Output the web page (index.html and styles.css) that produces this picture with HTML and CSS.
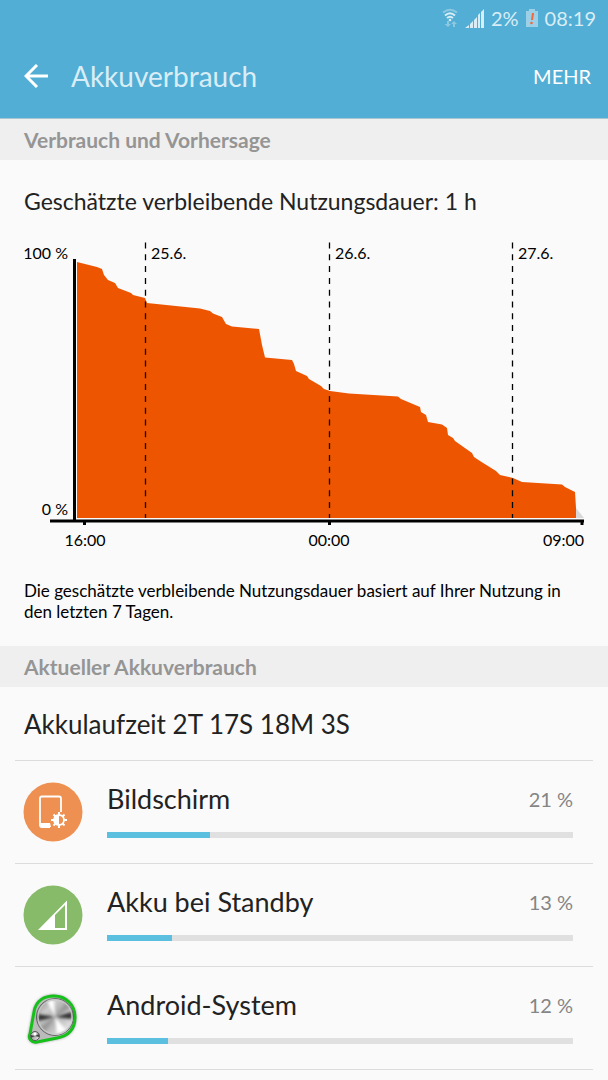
FILE: index.html
```
<!DOCTYPE html>
<html lang="de">
<head>
    <meta charset="UTF-8">
    <meta name="viewport" content="width=device-width, initial-scale=1">
    <title>Akkuverbrauch</title>
    <link rel="stylesheet" href="styles.css">
</head>
<body>
    <header class="top">
        <div class="status">
            <svg class="wifi" width="16" height="20" viewBox="0 0 16 20" fill="none" stroke="#d9edf6" stroke-width="2">
                <path d="M1 4.500Q8 -1 15 4.500" stroke="#8bc8e2"/>
                <path d="M3 7.500Q8 3 13 7.500"/>
                <path d="M5 10Q8 7.500 11 10"/>
                <circle cx="8" cy="12" r="1.300" fill="#d9edf6" stroke="none"/>
                <path d="M5 13v3H2.500L6 19l3-3H7v-3zM11 19v-3H9l3-3 3 3h-2v3z" fill="#8bc8e2" stroke="none"/>
            </svg>
            <svg width="19" height="19" viewBox="0 0 19 19" fill="#d9edf6">
                <path d="M0 19l4-3v3zM5 15l3-3v7H5zM9 11l3-3v11H9zM13 6l2-2v15h-2zM16 3l3-3v19h-3z"/>
            </svg>
            <span>2%</span>
            <svg width="12" height="18" viewBox="0 0 12 18">
                <path d="M0 2h3V0h6v2h3v16H0z" fill="#9bd0e6"/>
                <path d="M6 4h2l-1 7H5z" fill="#f0683c"/>
                <circle cx="5.500" cy="14" r="1.300" fill="#f0683c"/>
            </svg>
            <span>08:19</span>
        </div>
        <nav class="bar">
            <button class="back" aria-label="Zurück">
                <svg width="24" height="24" viewBox="0 0 24 24" fill="none" stroke="#fff" stroke-width="3">
                    <path d="M24 12H2M13 1L2 12l11 11"/>
                </svg>
            </button>
            <h1>Akkuverbrauch</h1>
            <button class="more">MEHR</button>
        </nav>
    </header>

    <main>
        <h2>Verbrauch und Vorhersage</h2>
        <section class="forecast">
            <p class="remaining">Geschätzte verbleibende Nutzungsdauer: 1 h</p>
            <svg class="chart" viewBox="24 240 560 312">
                <path d="M576 508l8 10h-8z" fill="#d8d8d8"/>
                <path class="area" d="M77 518V262L97 267 102 269 104 275 108 280 115 283 118 288 131 293 133 295 145 298 147 303 200 308.500 210 311 213 313.500 222 317 226 324 232 326.500 259 329 262 345 265 357.500 292 360 294 364 296 371 307 376 309 379 321 386 324 389 330 391 349 393.500 398 396.500 401 399 420 407 421 412 426 415 428 422 442 424.500 447 428 448 435 453 438 455 441 472 453 474 457 480 461 496 471 500 475 513 478 522 482 562 484.500 565 487 575 492 576 508V518z"/>
                <path class="days" d="M145.500 242.500V518M329.500 242.500V518M512.500 242.500V518"/>
                <path class="axis" d="M74.500 259V520M50 521H584"/>
                <path class="axis" d="M84.500 521V525M329.500 521V525M582 521V525"/>
                <g class="end">
                    <text x="68" y="259">100 %</text>
                    <text x="68" y="515">0 %</text>
                    <text x="584" y="546">09:00</text>
                </g>
                <text x="151" y="259">25.6.</text>
                <text x="335" y="259">26.6.</text>
                <text x="518" y="259">27.6.</text>
                <g class="mid">
                    <text x="85" y="546">16:00</text>
                    <text x="329" y="546">00:00</text>
                </g>
            </svg>
            <p class="note">Die geschätzte verbleibende Nutzungsdauer basiert auf Ihrer Nutzung in den letzten 7 Tagen.</p>
        </section>

        <h2>Aktueller Akkuverbrauch</h2>
        <section class="usage">
            <p class="runtime">Akkulaufzeit 2T 17S 18M 3S</p>
            <a class="item" href="#">
                <svg class="icon" viewBox="0 0 60 60">
                    <circle cx="30" cy="30" r="29.500" fill="#ee9051"/>
                    <path d="M38 30V16.500Q38 14.500 36 14.500H19Q17 14.500 17 16.500V43Q17 45 19 45H27" fill="none" stroke="#fff" stroke-width="1.800"/>
                    <path d="M17 41h10l1 4H18z" fill="#fff"/>
                    <circle cx="36" cy="38" r="5" fill="none" stroke="#fff" stroke-width="1.800"/>
                    <path d="M36 33a5 5 0 0 0 0 10z" fill="#fff"/>
                    <path d="M36 33v-3M36 43v3M31 38h-3M41 38h3M32.500 34.500l-2-2M39.500 41.500l2 2M39.500 34.500l2-2M32.500 41.500l-2 2" stroke="#fff" stroke-width="2"/>
                </svg>
                <div class="info">
                    <span class="name">Bildschirm</span>
                    <span class="percent">21 %</span>
                    <div class="track"><div class="fill" style="width: 22%"></div></div>
                </div>
            </a>
            <a class="item" href="#">
                <svg class="icon" viewBox="0 0 60 60">
                    <circle cx="30" cy="30" r="29.500" fill="#87bb69"/>
                    <path d="M15 45L44 15.500V45zM32 30V43H42V20z" fill="#fff" fill-rule="evenodd"/>
                </svg>
                <div class="info">
                    <span class="name">Akku bei Standby</span>
                    <span class="percent">13 %</span>
                    <div class="track"><div class="fill" style="width: 14%"></div></div>
                </div>
            </a>
            <a class="item" href="#">
                <svg class="icon" viewBox="0 0 60 60">
                    <defs>
                        <linearGradient id="metal" x1="0" y1="0" x2="1" y2="1">
                            <stop offset="0" stop-color="#888"/>
                            <stop offset=".3" stop-color="#ccc"/>
                            <stop offset=".5" stop-color="#aaa"/>
                            <stop offset=".8" stop-color="#ddd"/>
                            <stop offset="1" stop-color="#888"/>
                        </linearGradient>
                        <filter id="shadow" x="-20%" y="-20%" width="140%" height="140%">
                            <feGaussianBlur stdDeviation="1.500"/>
                        </filter>
                        <filter id="soft">
                            <feGaussianBlur stdDeviation="1.500"/>
                        </filter>
                    </defs>
                    <path d="M11 24C13 12 22 8 31 8C43 8 52 17 52 29C52 42 45 48 34 50L14 54C8 55 5 50 7 46Z" fill="#888" stroke="#777" stroke-width="2" filter="url(#shadow)"/>
                    <path d="M11 24C13 12 22 8 31 8C43 8 52 17 52 29C52 42 45 48 34 50L14 54C8 55 5 50 7 46Z" fill="#bbb" stroke="#16c01a" stroke-width="3"/>
                    <circle cx="32" cy="29" r="18.500" fill="url(#metal)" stroke="#666"/>
                    <g filter="url(#soft)">
                        <path d="M32 29L15 26 15 33zM32 29L49 24 49 31z" fill="#333"/>
                        <path d="M32 29L24 13 31 12zM32 29L34 46 43 42z" fill="#fff"/>
                        <path d="M32 29L43 15 47 19zM32 29L18 39 22 43z" fill="#999"/>
                    </g>
                    <circle cx="32" cy="29" r="17" fill="none" stroke="#ccc"/>
                    <circle cx="12" cy="48" r="4.500" fill="url(#metal)" stroke="#555"/>
                    <path d="M12 48l-4-1v3zM12 48l4-2v3z" fill="#444"/>
                    <circle cx="12" cy="46" r="1.500" fill="#fff"/>
                </svg>
                <div class="info">
                    <span class="name">Android-System</span>
                    <span class="percent">12 %</span>
                    <div class="track"><div class="fill" style="width: 13%"></div></div>
                </div>
            </a>
        </section>
    </main>
</body>
</html>
```
FILE: styles.css
```
* {
    margin: 0;
    padding: 0;
    box-sizing: border-box;
}
body {
    background: #fafafa;
    color: #222;
    font-family: Lato, "Open Sans", sans-serif;
}
button {
    border: 0;
    background: none;
    font-family: inherit;
    color: #fff;
    cursor: pointer;
}
svg {
    display: block;
}
.top {
    background: #52aed4;
    border-bottom: 1px solid #a9c5d2;
}
.status {
    display: flex;
    justify-content: flex-end;
    align-items: center;
    gap: 7px;
    height: 36px;
    padding-right: 12px;
    color: #d9edf6;
    font-size: 20px;
}
.bar {
    display: flex;
    align-items: center;
    height: 82px;
    padding: 0 17px 2px 24px;
}
.bar h1 {
    flex: 1;
    padding-left: 23px;
    color: #d9edf6;
    font-size: 28px;
    font-weight: 400;
}
.more {
    font-size: 20px;
}
h2 {
    padding: 0 24px;
    background: #efefef;
    color: #959595;
    font-size: 21px;
    font-weight: 700;
    line-height: 41px;
}
.forecast {
    padding: 27px 24px 24px;
}
.remaining {
    margin-bottom: 25px;
    font-size: 23px;
    line-height: 28px;
}
.chart {
    width: 100%;
    height: auto;
    overflow: visible;
}
.chart text {
    fill: #000;
    font-size: 16px;
}
.chart .end text {
    text-anchor: end;
}
.chart .mid text {
    text-anchor: middle;
}
.chart .area {
    fill: #ee5500;
}
.chart .axis {
    fill: none;
    stroke: #000;
    stroke-width: 3;
}
.chart .days {
    stroke: #000;
    stroke-width: 1.3;
    stroke-dasharray: 6 5.8;
}
.note {
    margin-top: 28px;
    color: #000;
    font-size: 17px;
    line-height: 21px;
}
.usage {
    padding: 0 15px;
}
.runtime {
    padding: 2px 9px 0;
    font-size: 26px;
    line-height: 71px;
}
.item {
    display: flex;
    align-items: center;
    gap: 24px;
    height: 103px;
    padding: 0 20px 0 8px;
    border-top: 1px solid #dcdcdc;
    color: #222;
    text-decoration: none;
}
.item:last-child {
    height: 104px;
    border-bottom: 1px solid #dcdcdc;
}
.icon {
    flex: none;
    width: 60px;
    height: 60px;
}
.info {
    flex: 1;
    display: grid;
    grid-template-columns: 1fr auto;
    align-items: center;
    row-gap: 16px;
    padding-bottom: 5px;
}
.name {
    font-size: 27px;
    line-height: 34px;
}
.percent {
    color: #858585;
    font-size: 20px;
}
.track {
    grid-column: 1 / 3;
    height: 6px;
    background: #e0e0e0;
}
.fill {
    height: 6px;
    background: #5bbfe0;
}
```
